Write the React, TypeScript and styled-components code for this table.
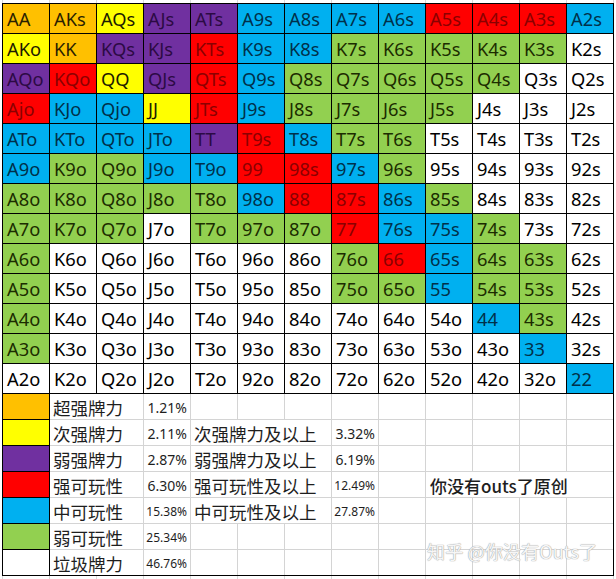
import React from 'react';
import styled, { createGlobalStyle } from 'styled-components';

type Tone = 'O' | 'Y' | 'P' | 'R' | 'B' | 'G' | 'W';

const palette: Record<Tone, { bg: string; fg: string }> = {
  O: { bg: '#FFC000', fg: '#2b1f00' },
  Y: { bg: '#FFFF00', fg: '#1c1c00' },
  P: { bg: '#7030A0', fg: '#2c0a44' },
  R: { bg: '#FF0000', fg: '#8a0000' },
  B: { bg: '#00B0F0', fg: '#00304a' },
  G: { bg: '#92D050', fg: '#1c2c00' },
  W: { bg: '#FFFFFF', fg: '#000000' },
};

const GlobalStyle = createGlobalStyle`
  html { margin: 0; padding: 0; background: #fff; }
  body {
    margin: 0;
    padding: 0;
    min-height: 579px;
    font-family: "Noto Sans", "Noto Sans CJK SC", sans-serif;
    background-color: #fff;
    background-image: repeating-linear-gradient(to right, #d9d9d9 0, #d9d9d9 1px, transparent 1px, transparent 47px);
    background-position: 2px 0;
  }
`;

const Page = styled.div`
  padding: 3px 0 0 2px;
  width: 612px;
`;

const Sheet = styled.div`
  width: 612px;
  background: #fff;
`;

const ChartGrid = styled.div`
  display: grid;
  grid-template-columns: repeat(13, 46px);
  grid-auto-rows: 29px;
  gap: 1px;
  background: #000;
  border: 1px solid #000;
`;

const HandCell = styled.div<{ $tone: Tone }>`
  background: ${(p) => palette[p.$tone].bg};
  color: ${(p) => palette[p.$tone].fg};
  font-family: "Noto Sans", sans-serif;
  font-size: 18.3px;
  line-height: 29px;
  padding-left: 4px;
  white-space: nowrap;
  overflow: hidden;
`;

const Legend = styled.div`
  display: flex;
  border: 1px solid #000;
  border-top: none;
  background: #fff;
`;

const SwatchColumn = styled.div`
  display: grid;
  grid-template-columns: 46px;
  grid-auto-rows: 25px;
  gap: 1px;
  background: #000;
  border-right: 1px solid #000;
`;

const Swatch = styled.div<{ $tone: Tone }>`
  background: ${(p) => palette[p.$tone].bg};
`;

const LegendGrid = styled.div`
  position: relative;
  display: grid;
  grid-template-columns: repeat(12, 46px);
  grid-auto-rows: 25px;
  gap: 1px;
  background: #d4d4d4;
`;

type Kind = 'label' | 'pct' | 'note' | 'empty';

const LegendCell = styled.div<{ $span: number; $kind: Kind; $size?: number }>`
  grid-column: span ${(p) => p.$span};
  background: #fff;
  display: flex;
  align-items: center;
  white-space: nowrap;
  overflow: visible;
  color: #1e1e1e;
  justify-content: ${(p) => (p.$kind === 'pct' ? 'flex-end' : 'flex-start')};
  padding: ${(p) =>
    p.$kind === 'pct' ? '2px 3px 0 0' : p.$kind === 'label' ? '2px 0 0 3px' : '2px 0 0 4px'};
  font-family: ${(p) =>
    p.$kind === 'pct'
      ? '"Noto Sans", sans-serif'
      : '"Noto Sans CJK SC", "Noto Sans", sans-serif'};
  font-size: ${(p) => (p.$size ? `${p.$size}px` : p.$kind === 'note' ? '17px' : '17.5px')};
  font-weight: ${(p) => (p.$kind === 'note' ? 500 : 400)};
  line-height: 22px;
`;

const Watermark = styled.div`
  position: absolute;
  left: 377px;
  top: 146px;
  font-family: "Noto Sans CJK SC", "Noto Sans", sans-serif;
  font-size: 18.2px;
  line-height: 22px;
  white-space: nowrap;
  color: rgba(255, 255, 255, 0.92);
  text-shadow: 0 0 1px #a0a0a0, 0 0 1px #a0a0a0;
  pointer-events: none;
`;

const ranks = ['A', 'K', 'Q', 'J', 'T', '9', '8', '7', '6', '5', '4', '3', '2'];

const toneRows = [
  'OOYPPBBBBRRRB',
  'YOPPRBBGGGGGW',
  'PRYPRBGGGGGWW',
  'RBBYRBGGGGWWW',
  'BBBBPRBGGWWWW',
  'BGGBBRRBGWWWW',
  'GGGGGBRRBGWWW',
  'GGGWGGGRBBGWW',
  'GWWWWWWGRBGGW',
  'GWWWWWWGGBGGW',
  'GWWWWWWWWWBGW',
  'GWWWWWWWWWWBW',
  'WWWWWWWWWWWWB',
];

const overrides: Record<string, string> = { '3-0': 'Ajo', '3-2': 'Qjo' };

const handLabel = (r: number, c: number) => {
  const o = overrides[`${r}-${c}`];
  if (o) return o;
  if (r === c) return ranks[r] + ranks[r];
  if (c > r) return ranks[r] + ranks[c] + 's';
  return ranks[c] + ranks[r] + 'o';
};

type Item = { span: number; kind: Kind; text?: string; size?: number };

const pct = (t: string): Item => ({ span: 1, kind: 'pct', text: t, size: t.length > 5 ? 12 : 14 });

const legendRows: { tone: Tone; items: Item[] }[] = [
  { tone: 'O', items: [{ span: 2, kind: 'label', text: '超强牌力' }, pct('1.21%')] },
  {
    tone: 'Y',
    items: [
      { span: 2, kind: 'label', text: '次强牌力' },
      pct('2.11%'),
      { span: 3, kind: 'label', text: '次强牌力及以上' },
      pct('3.32%'),
    ],
  },
  {
    tone: 'P',
    items: [
      { span: 2, kind: 'label', text: '弱强牌力' },
      pct('2.87%'),
      { span: 3, kind: 'label', text: '弱强牌力及以上' },
      pct('6.19%'),
    ],
  },
  {
    tone: 'R',
    items: [
      { span: 2, kind: 'label', text: '强可玩性' },
      pct('6.30%'),
      { span: 3, kind: 'label', text: '强可玩性及以上' },
      pct('12.49%'),
      { span: 1, kind: 'empty' },
      { span: 4, kind: 'note', text: '你没有outs了原创' },
    ],
  },
  {
    tone: 'B',
    items: [
      { span: 2, kind: 'label', text: '中可玩性' },
      pct('15.38%'),
      { span: 3, kind: 'label', text: '中可玩性及以上' },
      pct('27.87%'),
    ],
  },
  { tone: 'G', items: [{ span: 2, kind: 'label', text: '弱可玩性' }, pct('25.34%')] },
  { tone: 'W', items: [{ span: 2, kind: 'label', text: '垃圾牌力' }, pct('46.76%')] },
];

const fillRow = (items: Item[]): Item[] => {
  const used = items.reduce((s, i) => s + i.span, 0);
  const rest: Item[] = Array.from({ length: 12 - used }, () => ({ span: 1, kind: 'empty' }));
  return [...items, ...rest];
};

export default function App() {
  return (
    <>
      <GlobalStyle />
      <Page>
        <Sheet>
          <ChartGrid>
            {toneRows.map((row, r) =>
              row.split('').map((t, c) => (
                <HandCell key={`${r}-${c}`} $tone={t as Tone}>
                  {handLabel(r, c)}
                </HandCell>
              ))
            )}
          </ChartGrid>
          <Legend>
            <SwatchColumn>
              {legendRows.map((row, i) => (
                <Swatch key={i} $tone={row.tone} />
              ))}
            </SwatchColumn>
            <LegendGrid>
              {legendRows.map((row, r) =>
                fillRow(row.items).map((it, i) => (
                  <LegendCell key={`${r}-${i}`} $span={it.span} $kind={it.kind} $size={it.size}>
                    {it.text}
                  </LegendCell>
                ))
              )}
              <Watermark>知乎 @你没有Outs了</Watermark>
            </LegendGrid>
          </Legend>
        </Sheet>
      </Page>
    </>
  );
}
